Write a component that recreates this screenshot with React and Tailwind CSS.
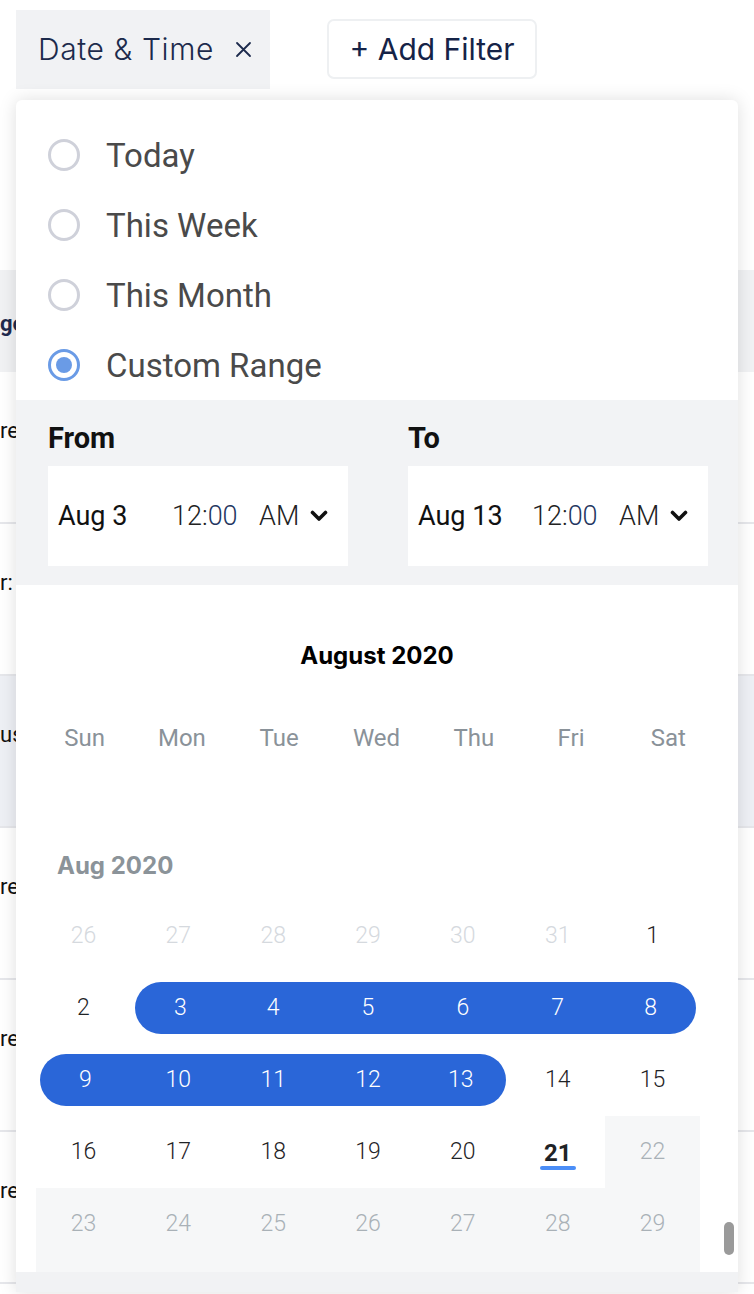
import React from "react";

const weekdays = ["Sun", "Mon", "Tue", "Wed", "Thu", "Fri", "Sat"];

const rows = [
  [
    { d: 26, k: "out" },
    { d: 27, k: "out" },
    { d: 28, k: "out" },
    { d: 29, k: "out" },
    { d: 30, k: "out" },
    { d: 31, k: "out" },
    { d: 1, k: "n" },
  ],
  [
    { d: 2, k: "n" },
    { d: 3, k: "r", s: true },
    { d: 4, k: "r" },
    { d: 5, k: "r" },
    { d: 6, k: "r" },
    { d: 7, k: "r" },
    { d: 8, k: "r", e: true },
  ],
  [
    { d: 9, k: "r", s: true },
    { d: 10, k: "r" },
    { d: 11, k: "r" },
    { d: 12, k: "r" },
    { d: 13, k: "r", e: true },
    { d: 14, k: "n" },
    { d: 15, k: "n" },
  ],
  [
    { d: 16, k: "n" },
    { d: 17, k: "n" },
    { d: 18, k: "n" },
    { d: 19, k: "n" },
    { d: 20, k: "n" },
    { d: 21, k: "today" },
    { d: 22, k: "fut" },
  ],
  [
    { d: 23, k: "fut" },
    { d: 24, k: "fut" },
    { d: 25, k: "fut" },
    { d: 26, k: "fut" },
    { d: 27, k: "fut" },
    { d: 28, k: "fut" },
    { d: 29, k: "fut" },
  ],
];

const numFont = { fontFamily: "Roboto, 'Liberation Sans', sans-serif" };
const interFont = { fontFamily: "Inter, Roboto, sans-serif" };

function Day({ c, last }) {
  const h = last ? "h-[84px]" : "h-[72px]";
  if (c.k === "r") {
    return (
      <div className={`${h} flex flex-col`}>
        <div
          className={`mt-[10px] h-[52px] flex items-center justify-center bg-[#2a66d8] text-white text-[23px] font-light ${
            c.s ? "ml-[4px] rounded-l-full" : ""
          } ${c.e ? "mr-[4px] rounded-r-full" : ""}`}
        >
          {c.d}
        </div>
      </div>
    );
  }
  if (c.k === "today") {
    return (
      <div className={`${h} flex flex-col items-center justify-center`}>
        <div className="h-[5px]" />
        <div className="h-[26px] leading-[26px] text-[24px] font-bold text-[#1f2326]">{c.d}</div>
        <div className="h-[4px] w-[36px] rounded-full bg-[#4b8ef7]" />
      </div>
    );
  }
  const color =
    c.k === "out" ? "text-[#d5d9de]" : c.k === "fut" ? "text-[#a9b1b7]" : "text-[#1f2326]";
  const bg = c.k === "fut" ? "bg-[#f6f7f8]" : "";
  return (
    <div className={`${h} ${bg} flex flex-col`}>
      <div className={`h-[72px] flex items-center justify-center text-[23px] font-light ${color}`}>
        {c.d}
      </div>
    </div>
  );
}

function Radio({ label, checked }) {
  return (
    <div className="h-[70px] flex items-center pl-[32px] gap-[26px]">
      {checked ? (
        <div className="w-[32px] h-[32px] rounded-full border-[3px] border-[#6a9be6] flex items-center justify-center">
          <div className="w-[16px] h-[16px] rounded-full bg-[#6a9be6]" />
        </div>
      ) : (
        <div className="w-[32px] h-[32px] rounded-full border-[3px] border-[#cfd1da]" />
      )}
      <span className="text-[33px] text-[#4a4a4a] leading-none">{label}</span>
    </div>
  );
}

function Chevron() {
  return (
    <svg width="18" height="12" viewBox="0 0 18 12" fill="none">
      <path d="M2.5 2.5 L9 9 L15.5 2.5" stroke="#111" strokeWidth="3.6" strokeLinecap="round" strokeLinejoin="round" />
    </svg>
  );
}

function DateInput({ date }) {
  return (
    <div className="w-[300px] h-[100px] bg-white flex items-center pl-[10px] text-[27px] text-[#111]">
      <span className="w-[114px]">{date}</span>
      <span className="w-[87px] text-[#222] font-light">
        12:<span className="text-[#24365f]">00</span>
      </span>
      <span className="w-[51px] text-[#222] font-light">AM</span>
      <Chevron />
    </div>
  );
}

function TableRow({ text, bold, tall, bg }) {
  return (
    <div className={`${tall ? "h-[102px]" : "h-[152px]"} ${bg || ""} ${tall ? "" : "border-b-2 border-[#e6e7eb]"} flex`}>
      <div
        className={`${tall ? "pt-[37px]" : "pt-[42px]"} text-[22px] ${bold ? "font-bold text-[#1f2a4e]" : "text-[#111]"}`}
      >
        {text}
      </div>
    </div>
  );
}

export default function App() {
  return (
    <div
      className="relative w-[754px] h-[1294px] overflow-hidden bg-white"
      style={{ fontFamily: "Roboto, 'Liberation Sans', sans-serif" }}
    >
      {/* filter bar */}
      <div className="flex items-start pt-[10px] pl-[16px] gap-[57px]" style={interFont}>
        <div className="h-[79px] w-[254px] bg-[#f1f2f4] flex items-center pl-[22px] gap-[21px]">
          <span className="text-[30px] tracking-[0.6px] text-[#1c2a4c] font-light">Date &amp; Time</span>
          <svg width="17" height="17" viewBox="0 0 17 17">
            <path d="M2 2 L15 15 M15 2 L2 15" stroke="#1c2a4c" strokeWidth="1.8" strokeLinecap="round" />
          </svg>
        </div>
        <div className="mt-[9px] h-[60px] w-[210px] border-2 border-[#eef0f2] rounded-[7px] flex items-center justify-center">
          <span className="text-[30px] text-[#152347] font-normal">+ Add Filter</span>
        </div>
      </div>

      {/* background table */}
      <div className="mt-[181px]">
        <TableRow text="ge" bold tall bg="bg-[#f1f2f4]" />
        <TableRow text="re" />
        <TableRow text="r:" />
        <TableRow text="us" bg="bg-[#eef0f5]" />
        <TableRow text="re" />
        <TableRow text="re" />
        <TableRow text="re" />
      </div>

      {/* popover */}
      <div className="absolute left-[16px] top-[100px] w-[722px] bg-white rounded-t-[6px] shadow-[0_0_18px_rgba(0,0,0,0.13)]">
        <div className="pt-[20px]">
          <Radio label="Today" />
          <Radio label="This Week" />
          <Radio label="This Month" />
          <Radio label="Custom Range" checked />
        </div>

        <div className="h-[185px] bg-[#f2f3f5] pl-[32px] pt-[22px] flex gap-[60px]">
          <div className="flex flex-col">
            <span className="text-[29px] leading-[33px] font-bold text-[#111] mb-[11px]">From</span>
            <DateInput date="Aug 3" />
          </div>
          <div className="flex flex-col">
            <span className="text-[29px] leading-[33px] font-bold text-[#111] mb-[11px]">To</span>
            <DateInput date="Aug 13" />
          </div>
        </div>

        <div className="relative">
          <div
            className="pt-[57px] text-center text-[24px] leading-[28px] font-bold text-[#000]"
            style={interFont}
          >
            August 2020
          </div>
          <div className="mt-[54px] ml-[20px] w-[681px] grid grid-cols-7">
            {weekdays.map((w) => (
              <div key={w} className="text-center text-[24px] leading-[28px] text-[#8a9299]">
                {w}
              </div>
            ))}
          </div>
          <div
            className="mt-[100px] ml-[41px] text-[24px] leading-[28px] font-bold text-[#8b9399]"
            style={interFont}
          >
            Aug 2020
          </div>
          <div className="mt-[20px] ml-[20px] w-[664px] grid grid-cols-7" style={numFont}>
            {rows.map((r, i) =>
              r.map((c, j) => <Day key={`${i}-${j}`} c={c} last={i === 4} />)
            )}
          </div>
          <div className="absolute right-[4px] bottom-[17px] w-[10px] h-[33px] rounded-full bg-[#9a9a9a]" />
        </div>

        <div className="h-[20px] bg-[#f1f2f4]" />
      </div>
    </div>
  );
}
